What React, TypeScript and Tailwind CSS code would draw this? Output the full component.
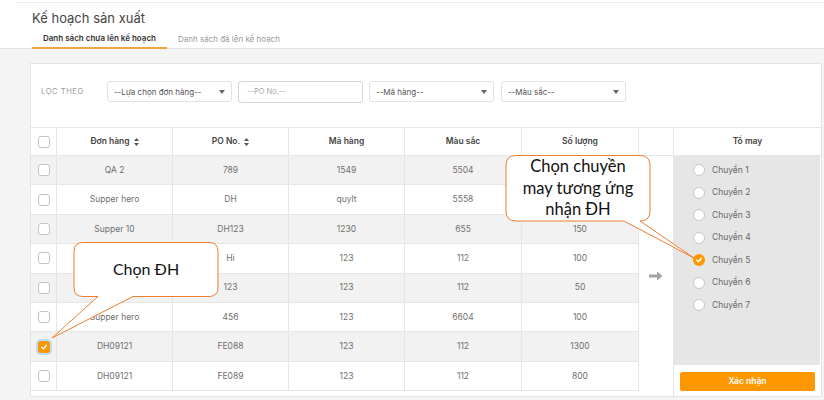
import React from "react";

type Row = {
  order: string;
  po: string;
  code: string;
  color: string;
  qty: string;
  checked?: boolean;
};

// cells covered by the callouts are left blank
const rows: Row[] = [
  { order: "QA 2", po: "789", code: "1549", color: "5504", qty: "" },
  { order: "Supper hero", po: "DH", code: "quylt", color: "5558", qty: "" },
  { order: "Supper 10", po: "DH123", code: "1230", color: "655", qty: "150" },
  { order: "", po: "Hi", code: "123", color: "112", qty: "100" },
  { order: "", po: "123", code: "123", color: "112", qty: "50" },
  { order: "Supper hero", po: "456", code: "123", color: "6604", qty: "100" },
  { order: "DH09121", po: "FE088", code: "123", color: "112", qty: "1300", checked: true },
  { order: "DH09121", po: "FE089", code: "123", color: "112", qty: "800" },
];

const lines = ["Chuyền 1", "Chuyền 2", "Chuyền 3", "Chuyền 4", "Chuyền 5", "Chuyền 6", "Chuyền 7"];

const SortIcon = () => (
  <svg width="5" height="8" viewBox="0 0 5 8" className="ml-[4px]">
    <path d="M2.5 0 L5 3 H0 Z M2.5 8 L5 5 H0 Z" fill="#555" />
  </svg>
);

const Caret = () => (
  <svg width="6" height="4" viewBox="0 0 6 4">
    <path d="M0 0 H6 L3 4 Z" fill="#666" />
  </svg>
);

const Check = ({ size = 8 }: { size?: number }) => (
  <svg width={size} height={size} viewBox="0 0 10 10">
    <path d="M2 5.2 L4.2 7.2 L8 2.8" stroke="#fff" strokeWidth="1.8" fill="none" strokeLinecap="round" strokeLinejoin="round" />
  </svg>
);

const Checkbox = ({ checked }: { checked?: boolean }) =>
  checked ? (
    <div className="w-[12px] h-[12px] rounded-[3px] bg-[#ff9800] flex items-center justify-center ring-2 ring-[#b9dcf7]">
      <Check />
    </div>
  ) : (
    <div className="w-[12px] h-[12px] rounded-[3px] border border-[#c4c4c4] bg-white" />
  );

const Select = ({ label }: { label: string }) => (
  <div className="w-[125px] h-[21px] border border-[#e2e2e2] rounded-[3px] bg-white flex items-center justify-between px-[6px] text-[8px] text-[#555]">
    <span>{label}</span>
    <Caret />
  </div>
);

const cols = ["w-[116px]", "w-[116px]", "w-[116px]", "w-[117px]", "w-[117px]"];

export default function App() {
  return (
    <div className="relative w-[824px] h-[400px] overflow-hidden bg-[#f4f4f4] font-['Inter',sans-serif]">
      {/* header */}
      <div className="bg-white h-[49px] border-b border-[#e3e3e3] pt-[2px]">
        <div className="ml-[16px] h-px bg-[#ededed]" />
        <div className="pl-[32px] pt-[7px] h-[26px] text-[13px] leading-[16px] text-[#444]">Kế hoạch sản xuất</div>
        <div className="flex pl-[32px]">
          <div className="h-[20px] px-[11px] flex items-center border-b-2 border-[#f0a44a] text-[8px] font-semibold text-[#333]">
            Danh sách chưa lên kế hoạch
          </div>
          <div className="h-[20px] px-[11px] flex items-center text-[8px] text-[#999]">Danh sách đã lên kế hoạch</div>
        </div>
      </div>

      {/* card */}
      <div className="ml-[30px] mt-[14px] w-[792px] h-[334px] bg-white border border-[#e4e4e4] flex flex-col">
        <div className="h-[63px] pt-[17px] pl-[10px] flex items-start">
          <div className="h-[21px] w-[66px] flex items-center text-[7.5px] tracking-[0.08em] text-[#9a9a9a]">LỌC THEO</div>
          <div className="flex gap-[6px]">
            <Select label="--Lựa chọn đơn hàng--" />
            <div className="w-[125px] h-[22px] border border-[#d6d6d6] rounded-[3px] bg-white flex items-center px-[8px] text-[7.5px] text-[#aaa]">
              --PO No.--
            </div>
            <Select label="--Mã hàng--" />
            <div className="ml-px">
              <Select label="--Màu sắc--" />
            </div>
          </div>
        </div>

        <div className="flex flex-1 border-t border-[#e6e6e6]">
          {/* main table */}
          <div className="w-[608px] flex flex-col">
            <div className="flex h-[28px] border-b border-[#e6e6e6] text-[8.5px] font-semibold text-[#444]">
              <div className="w-[26px] border-r border-[#e6e6e6] flex items-center justify-center">
                <Checkbox />
              </div>
              <div className={`${cols[0]} border-r border-[#e6e6e6] flex items-center justify-center`}>
                Đơn hàng <SortIcon />
              </div>
              <div className={`${cols[1]} border-r border-[#e6e6e6] flex items-center justify-center`}>
                PO No. <SortIcon />
              </div>
              <div className={`${cols[2]} border-r border-[#e6e6e6] flex items-center justify-center`}>Mã hàng</div>
              <div className={`${cols[3]} border-r border-[#e6e6e6] flex items-center justify-center`}>Màu sắc</div>
              <div className={`${cols[4]} border-r border-[#e6e6e6] flex items-center justify-center`}>Số lượng</div>
            </div>
            {rows.map((r, i) => (
              <div
                key={i}
                className={`flex h-[29.4px] border-b border-[#e6e6e6] text-[8.5px] text-[#707070] ${
                  i % 2 === 0 ? "bg-[#f2f2f2]" : "bg-white"
                }`}
              >
                <div className="w-[26px] border-r border-[#e6e6e6] flex items-center justify-center">
                  <Checkbox checked={r.checked} />
                </div>
                {[r.order, r.po, r.code, r.color, r.qty].map((v, j) => (
                  <div key={j} className={`${cols[j]} border-r border-[#e6e6e6] flex items-center justify-center`}>
                    {v}
                  </div>
                ))}
              </div>
            ))}
          </div>

          {/* arrow column */}
          <div className="w-[35px] border-r border-[#e6e6e6] flex flex-col">
            <div className="h-[28px] border-b border-[#e6e6e6]" />
            <div className="flex-1 flex items-center justify-center">
              <svg width="14" height="10" viewBox="0 0 14 10">
                <path d="M0 3.5 H8 V0.5 L13.5 5 L8 9.5 V6.5 H0 Z" fill="#a3a3a3" />
              </svg>
            </div>
          </div>

          {/* line panel */}
          <div className="flex-1 flex flex-col">
            <div className="h-[28px] border-b border-[#e6e6e6] flex items-center justify-center text-[8.5px] font-semibold text-[#444]">
              Tổ may
            </div>
            <div className="h-[209px] bg-[#e6e6e6] mr-px pt-[3px] pl-[19px]">
              {lines.map((l, i) => (
                <div key={l} className="h-[22.5px] flex items-center text-[8.5px] text-[#666]">
                  {i === 4 ? (
                    <div className="w-[12px] h-[12px] rounded-full bg-[#ff9800] flex items-center justify-center">
                      <Check />
                    </div>
                  ) : (
                    <div className="w-[12px] h-[12px] rounded-full border border-[#c6c6c6] bg-white" />
                  )}
                  <span className="ml-[7px]">{l}</span>
                </div>
              ))}
            </div>
            <div className="px-[6px] pt-[7px]">
              <div className="h-[19px] rounded-[2px] bg-[#ff9800] flex items-center justify-center text-[8.5px] font-semibold text-white">
                Xác nhận
              </div>
            </div>
          </div>
        </div>
      </div>

      {/* callouts */}
      <svg className="absolute left-0 top-0 pointer-events-none" width="824" height="400" viewBox="0 0 824 400">
        <path
          d="M83 242.5 H209 Q218 242.5 218 251.5 V287.5 Q218 296.5 209 296.5 H133 L52 338 L98 296.5 H83 Q74 296.5 74 287.5 V251.5 Q74 242.5 83 242.5 Z"
          fill="#fff"
          stroke="#ed7d31"
          strokeWidth="1"
        />
        <path
          d="M516 155.5 H640 Q650 155.5 650 165.5 V211 Q650 221 640 221 H640 L694 258 L624 221 H516 Q506 221 506 211 V165.5 Q506 155.5 516 155.5 Z"
          fill="#fff"
          stroke="#ed7d31"
          strokeWidth="1"
        />
      </svg>
      <div className="absolute left-[74px] top-[242px] w-[144px] h-[54px] flex items-center justify-center font-['Lato',sans-serif] text-[16px] text-[#111]">
        Chọn ĐH
      </div>
      <div className="absolute left-[506px] top-[156px] w-[144px] flex flex-col items-center font-['Lato',sans-serif] text-[16.5px] leading-[21.5px] text-[#111]">
        <span>Chọn chuyền</span>
        <span>may tương ứng</span>
        <span>nhận ĐH</span>
      </div>
    </div>
  );
}
